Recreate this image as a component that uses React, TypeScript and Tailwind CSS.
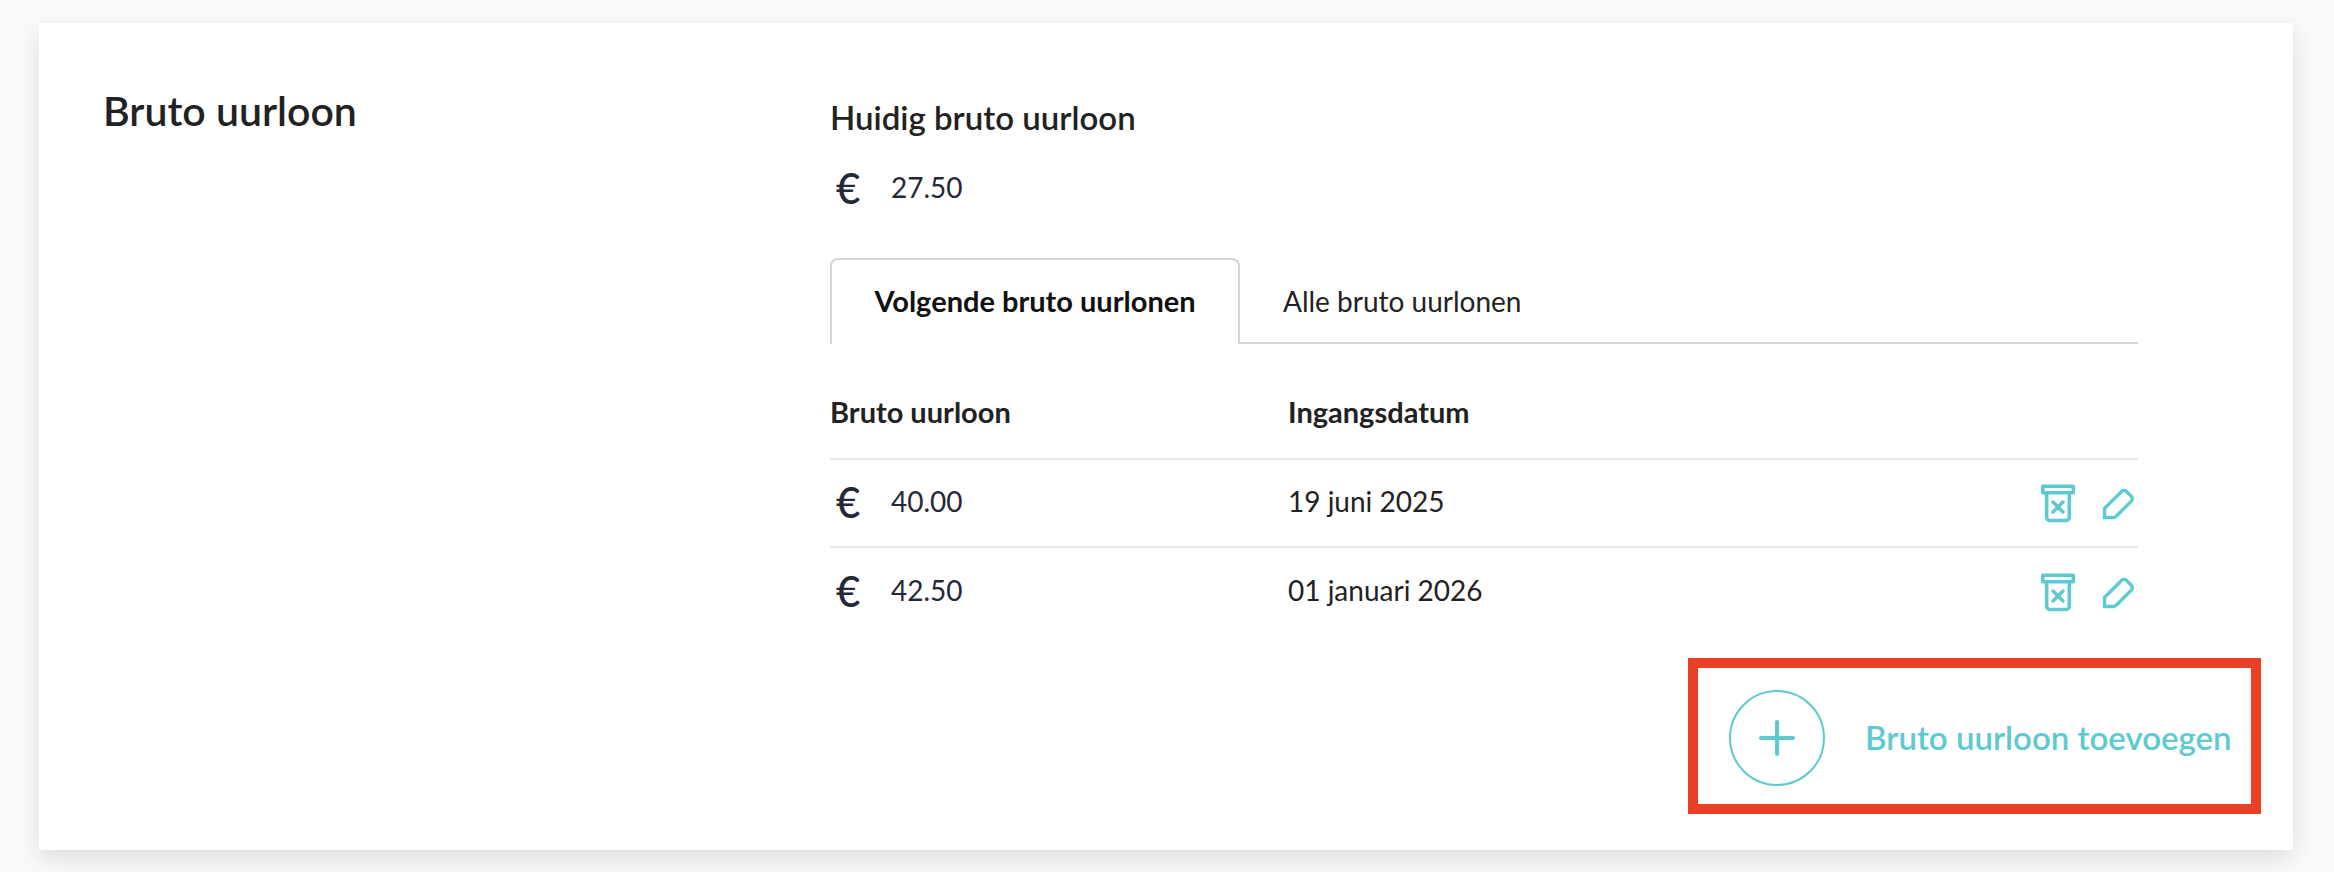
import React from "react";

type Wage = { amount: string; startDate: string };

const upcomingWages: Wage[] = [
  { amount: "40.00", startDate: "19 juni 2025" },
  { amount: "42.50", startDate: "01 januari 2026" },
];

function Amount({ value }: { value: string }) {
  return (
    <span className="flex h-10 items-center text-[#252837]">
      <span className="w-[61px] pt-0.5 pl-1.5 text-[42px] leading-10 font-medium">€</span>
      <span>{value}</span>
    </span>
  );
}

function TrashIcon() {
  return (
    <svg width="36" height="40" viewBox="0 0 36 40" fill="none" stroke="currentColor" strokeWidth="3.5" strokeLinejoin="round" strokeLinecap="round" aria-hidden="true">
      <path d="M2.700 3.200h30.600v6.600H2.700Z" />
      <path d="M6.700 10v24.500a3 3 0 0 0 3 3h16.600a3 3 0 0 0 3-3V10" />
      <path d="m13 19 10 10M23 19 13 29" />
    </svg>
  );
}

function PencilIcon() {
  return (
    <svg width="36" height="40" viewBox="0 0 36 40" fill="none" stroke="currentColor" strokeWidth="3.4" aria-hidden="true">
      <path d="M4.500 34.500V25.500L21.600 8.400a3.400 3.400 0 0 1 4.800 0L31.300 13.300a3.400 3.400 0 0 1 0 4.800L16.200 33.200a4 4 0 0 1-2.800 1.300Z" />
    </svg>
  );
}

export default function App() {
  return (
    <main className="bg-[#fafafc] pt-[23px] pr-[41px] pb-[22px] pl-[39px] font-[Lato,sans-serif] text-[28px] leading-10 text-[#222]">
      <section className="bg-white px-16 pt-16 pb-9 shadow-[0_8px_24px_rgba(0,0,0,0.12)]">
        <div className="flex">
          <h1 className="w-[727px] shrink-0 text-[41px] leading-12 font-semibold">Bruto uurloon</h1>
          <div className="min-w-0 flex-1 pt-2.5 pr-[91px]">
            <h2 className="text-[33px] leading-10 font-semibold">Huidig bruto uurloon</h2>
            <div className="mt-[30px]">
              <Amount value="27.50" />
            </div>
            <div role="tablist" className="mt-[51px] flex h-[86px]">
              <button
                type="button"
                role="tab"
                aria-selected="true"
                className="w-[410px] rounded-t-lg border-2 border-b-0 border-[#d4d4d4] pb-0.5 text-center text-[29px] font-bold text-[#111]"
              >
                Volgende bruto uurlonen
              </button>
              <button
                type="button"
                role="tab"
                aria-selected="false"
                className="flex-1 border-b-2 border-[#d4d4d4] pt-0.5 pl-[43px] text-left"
              >
                Alle bruto uurlonen
              </button>
            </div>
            <table className="mt-10 w-full table-fixed border-collapse text-left">
              <thead>
                <tr className="h-[75px] border-b-2 border-[#e8e8e8] align-top text-[29px]">
                  <th scope="col" className="w-[458px] pt-2 font-bold">Bruto uurloon</th>
                  <th scope="col" className="pt-2 font-bold">Ingangsdatum</th>
                  <th scope="col" className="w-[120px]" aria-label="Acties" />
                </tr>
              </thead>
              <tbody>
                {upcomingWages.map((wage) => (
                  <tr key={wage.startDate} className="h-[88px] border-b-2 border-[#e8e8e8] last:border-b-0">
                    <td className="pb-1"><Amount value={wage.amount} /></td>
                    <td className="pb-1">{wage.startDate}</td>
                    <td>
                      <span className="flex justify-end gap-6 pr-0.5 text-[#5dcad1]">
                        <button type="button" aria-label="Verwijderen"><TrashIcon /></button>
                        <button type="button" aria-label="Bewerken"><PencilIcon /></button>
                      </span>
                    </td>
                  </tr>
                ))}
              </tbody>
            </table>
          </div>
        </div>
        <div className="-mr-8 mt-[23px] flex justify-end">
          <button
            type="button"
            className="flex h-[156px] w-[573px] items-center gap-10 border-10 border-[#ea4126] pt-1 pl-[31px] text-[33px] font-semibold whitespace-nowrap text-[#5dcad1]"
          >
            <span className="flex size-24 shrink-0 items-center justify-center rounded-full border-2">
              <svg width="36" height="36" viewBox="0 0 36 36" stroke="currentColor" strokeWidth="4" strokeLinecap="round" aria-hidden="true">
                <path d="M18 2v32M2 18h32" />
              </svg>
            </span>
            <span className="pb-0.5">Bruto uurloon toevoegen</span>
          </button>
        </div>
      </section>
    </main>
  );
}
